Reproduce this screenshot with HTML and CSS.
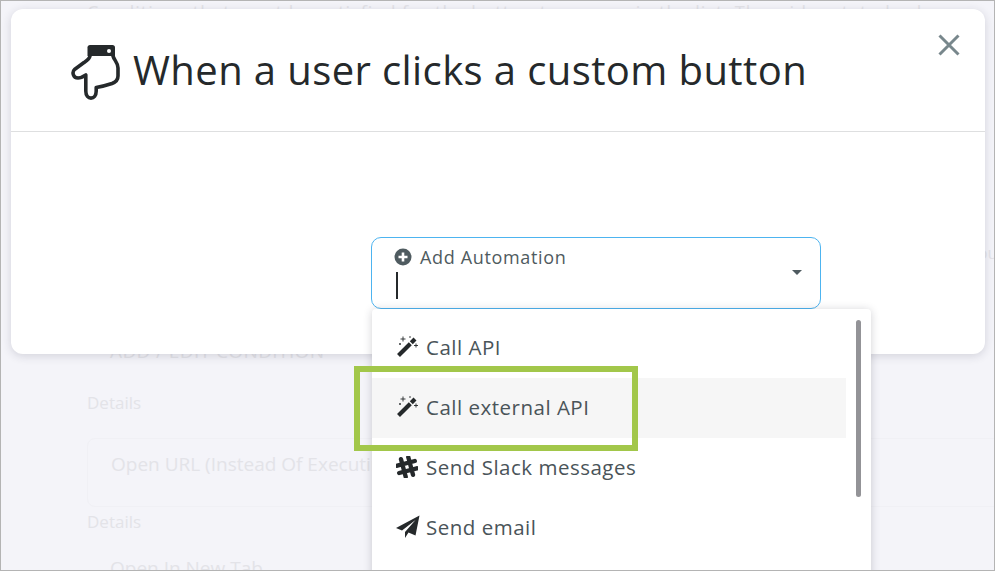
FILE: index.html
```html
<!DOCTYPE html>
<html lang="en">
<head>
<meta charset="utf-8">
<title>When a user clicks a custom button</title>
<link rel="stylesheet" href="styles.css">
</head>
<body>
<div class="frame">
  <div class="backdrop">
    <p class="bg-intro">Conditions that must be satisfied for the button to appear in the list. The wider stated rules</p>
    <p class="bg-aside">Button appears for you</p>
    <p class="bg-heading">ADD / EDIT CONDITION</p>
    <p class="bg-label">Details</p>
    <div class="bg-row">Open URL (Instead Of Executing Automation)</div>
    <p class="bg-label bg-label-tight">Details</p>
    <div class="bg-row bg-row-last">Open In New Tab</div>
  </div>

  <section class="modal">
    <header class="modal-head">
      <svg class="hand" viewBox="0 0 50 56" aria-hidden="true">
        <path class="hand-cuff" d="M16.500 2.500C16.500 1 17.500 0 19 0H41.500C43 0 44 1 44 2.500V11H16.500Z"/>
        <circle class="hand-dot" cx="38" cy="6" r="2"/>
        <path class="hand-line" d="M19 11C18.500 14 16 15.500 13 17.500L3.500 24.500C0.800 27 2 33 7 33C9.500 33 12.500 31.500 14.800 30V46C14.800 55.500 25.200 55.500 25.200 46V42.500C31 41.500 36.500 40 41 38.500C45 37 47 35 47 31V23C47 17.500 43 15 42 11"/>
      </svg>
      <h1 class="modal-title">When a user clicks a custom button</h1>
      <svg class="close" viewBox="0 0 22 22" aria-hidden="true"><path d="M1.500 1.500L20.500 20.500M20.500 1.500L1.500 20.500"/></svg>
    </header>
    <div class="modal-body">
      <div class="select">
        <div class="select-main">
          <div class="select-label">
            <svg class="plus" viewBox="0 0 18 18" aria-hidden="true"><circle cx="9" cy="9" r="8.500"/><path d="M9 4.500V13.500M4.500 9H13.500"/></svg>
            <span>Add Automation</span>
          </div>
          <span class="caret"></span>
        </div>
        <span class="arrow"></span>
      </div>
    </div>
  </section>

  <div class="menu">
    <ul class="menu-list">
      <li class="menu-item">
        <svg class="mi" viewBox="0 0 22 22" aria-hidden="true"><path class="wand" d="M2.500 19.500L14.300 7.700M15.300 6.700L19 3"/><path class="spark" d="M4.500 3H9.500M7 .5V5.500M18 9.500H22M20 7.500V11.500M3 8H5M4 7V9M13 1H15"/></svg>
        <span>Call API</span>
      </li>
      <li class="menu-item menu-item-active">
        <svg class="mi" viewBox="0 0 22 22" aria-hidden="true"><path class="wand" d="M2.500 19.500L14.300 7.700M15.300 6.700L19 3"/><path class="spark" d="M4.500 3H9.500M7 .5V5.500M18 9.500H22M20 7.500V11.500M3 8H5M4 7V9M13 1H15"/></svg>
        <span>Call external API</span>
      </li>
      <li class="menu-item">
        <svg class="mi" viewBox="0 0 22 22" aria-hidden="true"><path class="hash" d="M5 3.200L9.700 20.700M12.300 1.300L17 18.800M1.300 9.700L18.800 5M3.200 17L20.700 12.300"/></svg>
        <span>Send Slack messages</span>
      </li>
      <li class="menu-item">
        <svg class="mi mi-plane" viewBox="0 0 24 24" aria-hidden="true"><path d="M23.500 .5L19.500 20.500L12.500 17.500L9 23V17L19.500 5L6 15.500L0 13Z"/></svg>
        <span>Send email</span>
      </li>
    </ul>
    <div class="scrollbar"></div>
  </div>

  <div class="callout"></div>
</div>
</body>
</html>
```

FILE: styles.css
```css
* { box-sizing: border-box; }
html, body { margin: 0; height: 100%; }
body { font-family: "Open Sans", "Noto Sans", sans-serif; overflow: hidden; }

.frame {
  position: relative;
  width: 995px;
  height: 571px;
  overflow: hidden;
  background: #f4f4f9;
  border: 1px solid #b4b4b4;
}

.backdrop { width: 911px; margin-left: 86px; color: #e3e3e8; font-size: 17px; }
.backdrop p { margin: 0; }
.bg-intro { white-space: nowrap; line-height: 22px; height: 22px; font-size: 18px; letter-spacing: 1px; }
.bg-aside { margin-top: 219px !important; line-height: 22px; text-align: right; white-space: nowrap; }
.bg-heading { margin-top: 75px !important; padding-left: 23px; line-height: 24px; font-size: 19px; font-weight: 500; letter-spacing: .4px; white-space: nowrap; }
.bg-label { margin-top: 29px !important; line-height: 22px; }
.bg-label-tight { margin-top: 4px !important; }
.bg-row {
  margin-top: 24px;
  height: 69px;
  width: 960px;
  padding: 12px 23px;
  border: 1px solid #f0f0f5;
  border-radius: 8px;
  font-size: 19px;
  font-weight: 500;
  line-height: 26px;
  white-space: nowrap;
}
.bg-row-last { border: 0; margin-top: 13px; padding-top: 9px; }

.modal {
  position: absolute;
  left: 10px;
  top: 8px;
  width: 974px;
  height: 345px;
  background: #fff;
  border-radius: 12px;
  box-shadow: 0 2px 10px rgba(40, 40, 60, .16);
}
.modal-head {
  display: flex;
  align-items: center;
  gap: 12px;
  height: 123px;
  padding: 0 25px 0 60px;
  border-bottom: 1px solid #dedfe0;
}
.hand { width: 50px; height: 56px; flex: none; margin-top: 5px; }
.hand-cuff { fill: #25292b; }
.hand-dot { fill: #fff; }
.hand-line { fill: none; stroke: #25292b; stroke-width: 3.600; stroke-linecap: round; stroke-linejoin: round; }
.modal-title {
  flex: 1;
  margin: 0 0 1px;
  font-size: 40px;
  font-weight: 400;
  line-height: 48px;
  letter-spacing: .4px;
  color: #25292b;
  white-space: nowrap;
}
.close { width: 22px; height: 22px; flex: none; margin-top: -50px; }
.close path { fill: none; stroke: #78878c; stroke-width: 3; }

.modal-body { display: flex; padding: 105px 0 0 360px; }
.select {
  display: flex;
  align-items: center;
  justify-content: space-between;
  width: 450px;
  height: 72px;
  padding: 0 18px 0 23px;
  border: 1px solid #4db4f0;
  border-radius: 10px;
}
.select-main { display: flex; flex-direction: column; gap: 3px; margin-top: -3px; }
.select-label { display: flex; align-items: center; gap: 8px; font-size: 18px; line-height: 24px; letter-spacing: .65px; color: #4f5b60; }
.plus { width: 18px; height: 18px; flex: none; margin-left: -1px; }
.plus circle { fill: #4f5b60; }
.plus path { stroke: #fff; stroke-width: 2.600; }
.caret { display: block; width: 2px; height: 27px; margin-left: 1px; background: #25292b; }
.arrow { width: 0; height: 0; margin-top: -1px; border-left: 5px solid transparent; border-right: 5px solid transparent; border-top: 5px solid #4f5b60; }

.menu {
  position: absolute;
  left: 371px;
  top: 308px;
  width: 499px;
  height: 270px;
  padding: 9px 25px 0 0;
  background: #fff;
  border-radius: 4px;
  box-shadow: 0 1px 8px rgba(40, 40, 60, .22);
}
.menu-list { list-style: none; margin: 0; padding: 0; }
.menu-item {
  display: flex;
  align-items: center;
  gap: 7px;
  height: 60px;
  padding: 0 0 2px 24px;
  font-size: 20.500px;
  letter-spacing: .5px;
  color: #4a5459;
}
.menu-item span { margin-left: 1px; }
.menu-item-active { background: #f6f6f6; }
.mi { width: 22px; height: 22px; flex: none; fill: #25292b; }
.mi-plane { width: 24px; height: 24px; margin-right: -2px; }
.wand { fill: none; stroke: #25292b; stroke-width: 4.200; }
.spark { fill: none; stroke: #25292b; stroke-width: .9; }
.hash { fill: none; stroke: #25292b; stroke-width: 4.400; stroke-linecap: round; }
.scrollbar { position: absolute; right: 10px; top: 11px; width: 5px; height: 177px; border-radius: 3px; background: #939397; }

.callout {
  position: absolute;
  left: 353px;
  top: 365px;
  width: 284px;
  height: 85px;
  border: 6px solid #a2c74a;
}
```
